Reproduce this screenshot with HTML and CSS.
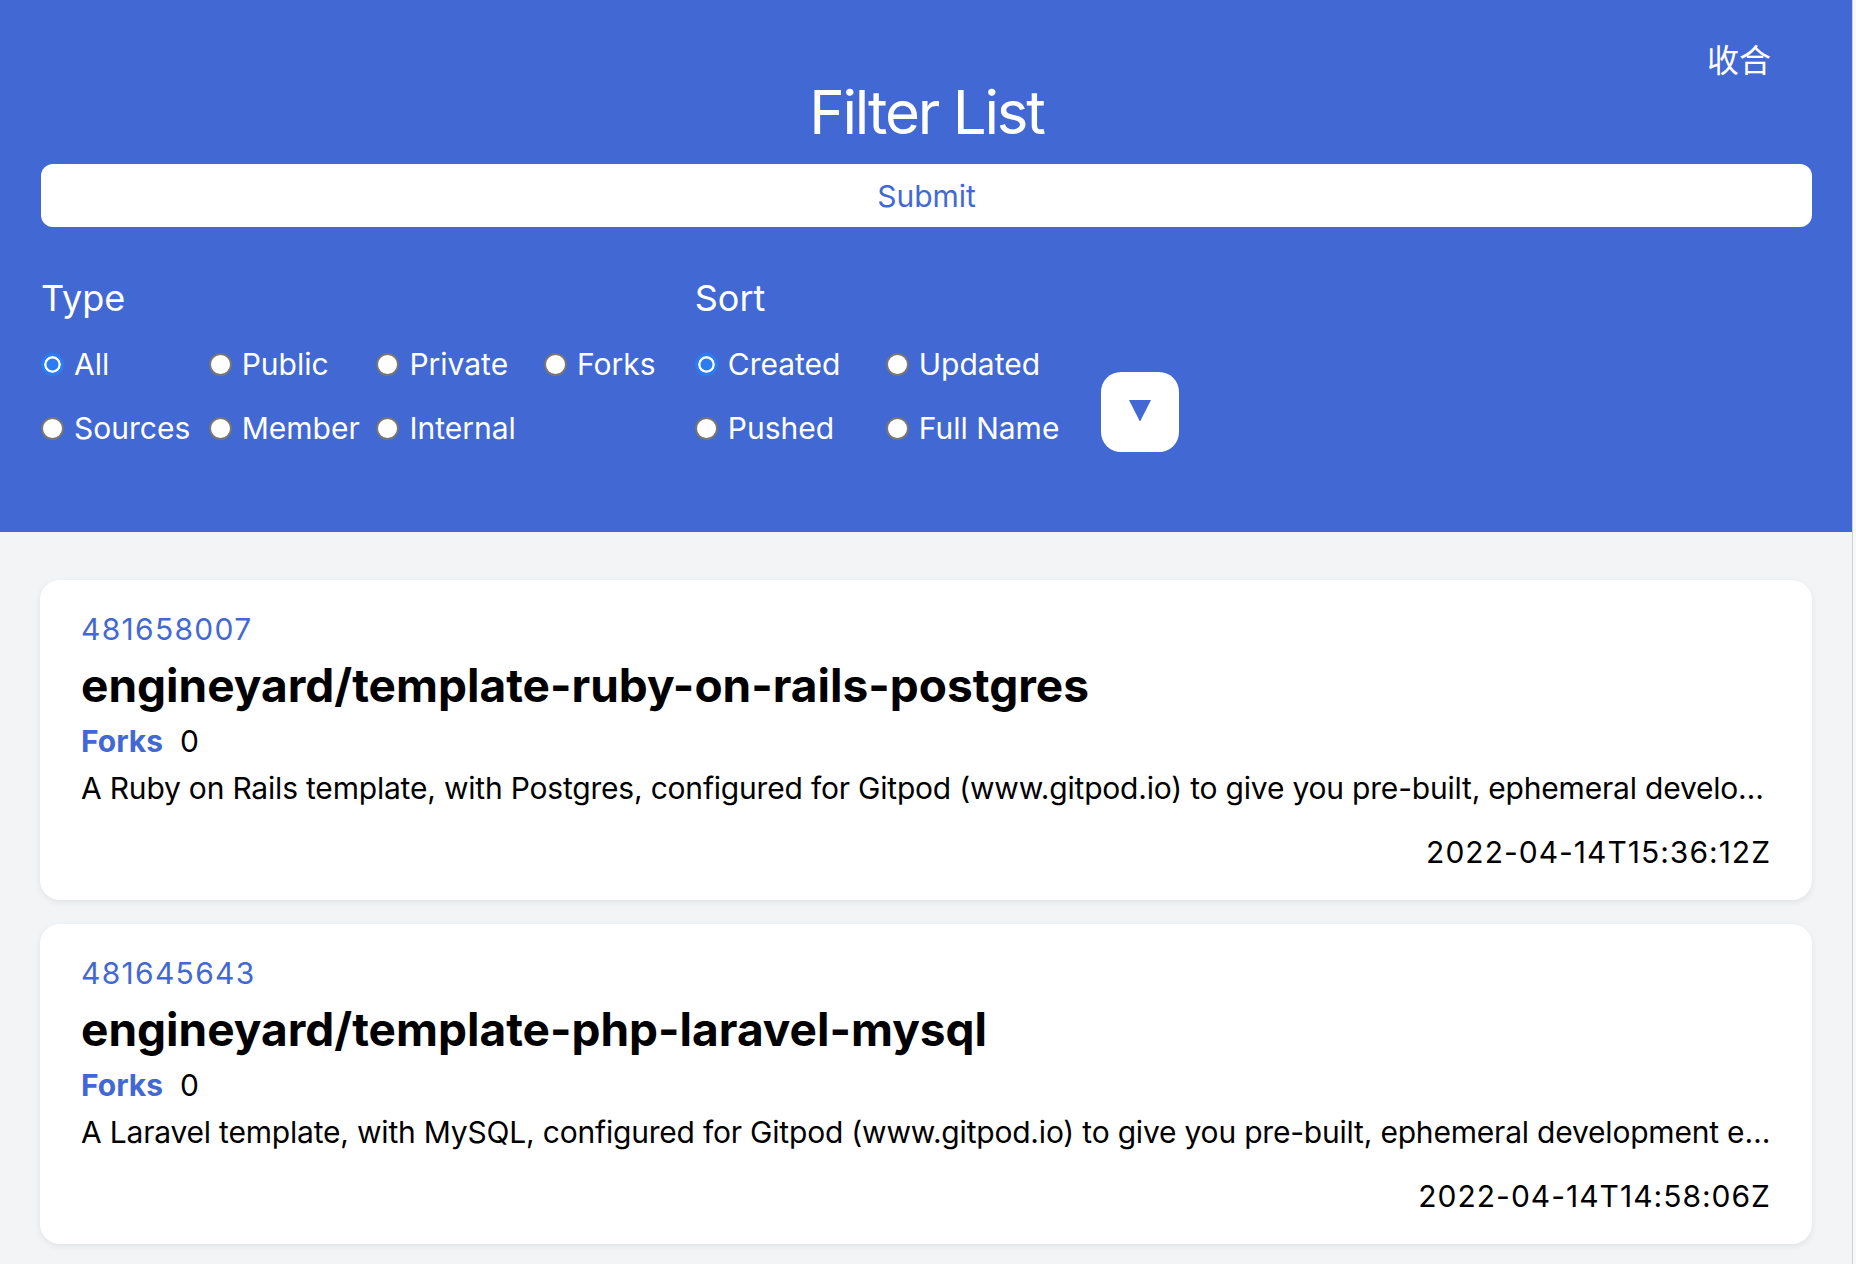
FILE: index.html
```html
<!DOCTYPE html>
<html lang="zh-Hant">
<head>
<meta charset="utf-8">
<title>Filter List</title>
<link rel="stylesheet" href="styles.css">
</head>
<body>
<div class="page">
  <header class="filter">
    <div class="topbar"><button class="collapse" type="button">收合</button></div>
    <h1 class="title">Filter List</h1>
    <button class="submit" type="button">Submit</button>
    <div class="options">
      <section class="group">
        <h2 class="group-title">Type</h2>
        <div class="radios radios-type">
          <label class="radio"><input type="radio" name="type" checked><span>All</span></label>
          <label class="radio"><input type="radio" name="type"><span>Public</span></label>
          <label class="radio"><input type="radio" name="type"><span>Private</span></label>
          <label class="radio"><input type="radio" name="type"><span>Forks</span></label>
          <label class="radio"><input type="radio" name="type"><span>Sources</span></label>
          <label class="radio"><input type="radio" name="type"><span>Member</span></label>
          <label class="radio"><input type="radio" name="type"><span>Internal</span></label>
        </div>
      </section>
      <section class="group group-sort">
        <h2 class="group-title">Sort</h2>
        <div class="radios radios-sort">
          <label class="radio"><input type="radio" name="sort" checked><span>Created</span></label>
          <label class="radio"><input type="radio" name="sort"><span>Updated</span></label>
          <label class="radio"><input type="radio" name="sort"><span>Pushed</span></label>
          <label class="radio"><input type="radio" name="sort"><span>Full Name</span></label>
        </div>
      </section>
      <button class="direction" type="button" aria-label="Direction">
        <svg class="direction-icon" viewBox="0 0 24 23" width="24" height="23"><path d="M1 1 H23 L12.6 21.6 Q12 22.6 11.4 21.6 Z" fill="currentColor"/></svg>
      </button>
    </div>
  </header>
  <main class="list">
    <article class="card">
      <div class="card-id">481658007</div>
      <h3 class="card-title">engineyard/template-ruby-on-rails-postgres</h3>
      <div class="card-forks"><span class="forks-label">Forks</span><span>0</span></div>
      <p class="card-desc">A Ruby on Rails template, with Postgres, configured for Gitpod (www.gitpod.io) to give you pre-built, ephemeral development environments.</p>
      <div class="card-date">2022-04-14T15:36:12Z</div>
    </article>
    <article class="card">
      <div class="card-id">481645643</div>
      <h3 class="card-title">engineyard/template-php-laravel-mysql</h3>
      <div class="card-forks"><span class="forks-label">Forks</span><span>0</span></div>
      <p class="card-desc">A Laravel template, with MySQL, configured for Gitpod (www.gitpod.io) to give you pre-built, ephemeral development environments.</p>
      <div class="card-date">2022-04-14T14:58:06Z</div>
    </article>
  </main>
</div>
</body>
</html>
```
FILE: styles.css
```css
* { box-sizing: border-box; }

html { background: #f8f8f8; }

body {
  margin: 0;
  font-family: Inter, "Noto Sans", "Noto Sans CJK TC", sans-serif;
  color: #000;
}

.page {
  margin-right: 3px;
  border-right: 1px solid #d0d0d0;
  background: #f3f4f6;
  min-height: 1264px;
}

.filter {
  background: #4269d3;
  color: #fff;
  padding: 40px 40px 86px 41px;
}

.topbar {
  display: flex;
  justify-content: flex-end;
  padding-right: 41px;
}

.collapse {
  background: none;
  border: 0;
  padding: 0;
  color: #fff;
  font-family: "Noto Sans CJK TC", "Noto Sans CJK SC", sans-serif;
  font-size: 32px;
  line-height: 36px;
}

.title {
  margin: 6px 0 0;
  text-align: center;
  font-size: 60px;
  line-height: 60px;
  font-weight: 400;
  letter-spacing: -2.2px;
}

.submit {
  display: block;
  width: 100%;
  margin-top: 22px;
  padding: 13.5px 0;
  background: #fff;
  color: #4269d3;
  border: 0;
  border-radius: 12px;
  font-family: Inter, sans-serif;
  font-size: 30px;
  line-height: 36px;
}

.options {
  display: flex;
  align-items: flex-end;
  margin-top: 51px;
}

.group-title {
  margin: 0;
  font-size: 36px;
  line-height: 40px;
  font-weight: 400;
}

.radios {
  display: grid;
  row-gap: 28px;
  margin-top: 28px;
}

.radios-type {
  grid-template-columns: repeat(4, 147.7px);
  column-gap: 20px;
}

.group-sort { margin-left: 3px; }

.radios-sort {
  grid-template-columns: repeat(2, 173px);
  column-gap: 18px;
}

.radio {
  display: flex;
  align-items: center;
  gap: 10px;
  font-size: 30px;
  line-height: 36px;
  white-space: nowrap;
}

.radio input {
  appearance: none;
  -webkit-appearance: none;
  flex: none;
  margin: 0;
  width: 23px;
  height: 23px;
  border-radius: 50%;
  background: #fff;
  border: 2px solid #767676;
}

.radio input:checked {
  border: 3px solid #2b7cf3;
  background: #2b7cf3;
  box-shadow: inset 0 0 0 2.5px #fff;
}

.direction {
  flex: none;
  display: flex;
  align-items: center;
  justify-content: center;
  width: 78px;
  height: 80px;
  margin-left: 42px;
  margin-bottom: -6px;
  padding: 0;
  border: 0;
  border-radius: 20px;
  background: #fff;
  color: #4269d3;
}

.direction-icon { display: block; margin-top: -3px; }

.list {
  display: flex;
  flex-direction: column;
  gap: 24px;
  padding: 48px 40px 21px 40px;
}

.card {
  background: #fff;
  border-radius: 20px;
  box-shadow: 0 2px 6px rgba(0, 0, 0, 0.08);
  padding: 31px 41px 30px;
}

.card-id {
  color: #4269d3;
  font-size: 30px;
  line-height: 36px;
  letter-spacing: 1.3px;
}

.card-title {
  margin: 14px 0 0;
  font-size: 46px;
  line-height: 48px;
  font-weight: 700;
}

.card-forks {
  margin-top: 14px;
  font-size: 30px;
  line-height: 36px;
}

.forks-label {
  color: #4269d3;
  font-weight: 700;
  margin-right: 17px;
}

.card-desc {
  margin: 11px 0 0;
  font-size: 30px;
  line-height: 36px;
  letter-spacing: -0.2px;
  white-space: nowrap;
  overflow: hidden;
  text-overflow: ellipsis;
}

.card-date {
  margin-top: 28px;
  text-align: right;
  font-size: 30px;
  line-height: 36px;
  letter-spacing: 1px;
}
```
